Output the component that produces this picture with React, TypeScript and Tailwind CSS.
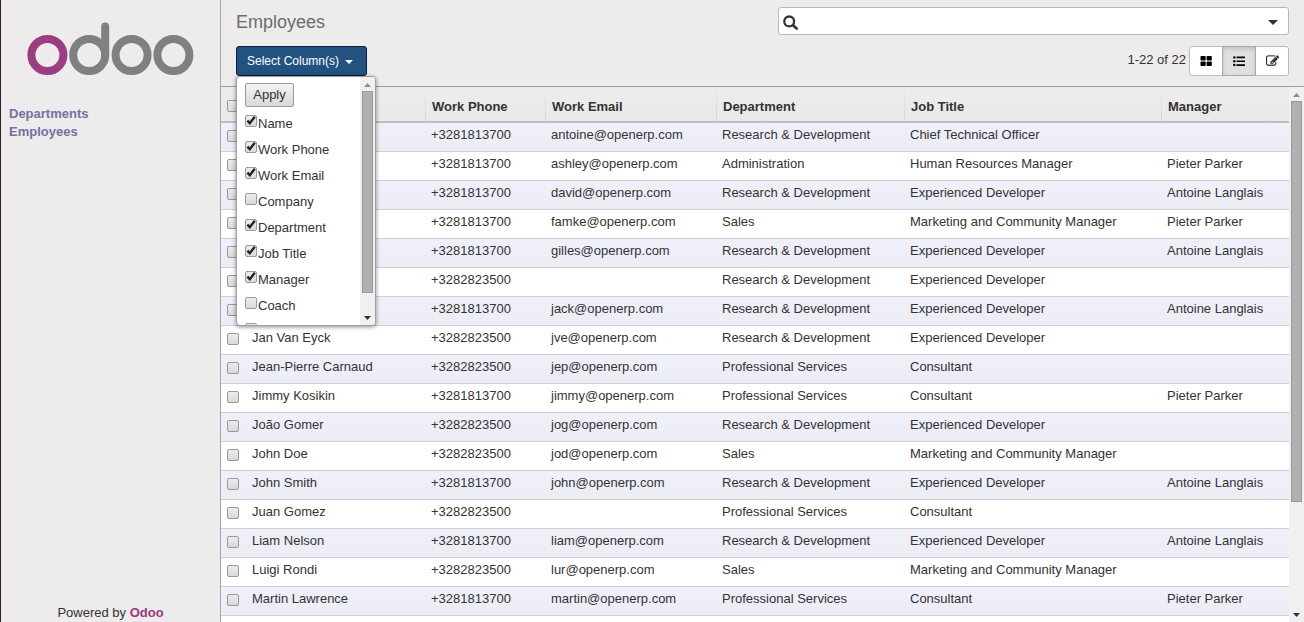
import { useState } from 'react';

type Employee = {
  name: string;
  phone: string;
  email: string;
  department: string;
  job: string;
  manager: string;
};

const RD = 'Research & Development';
const DEV = 'Experienced Developer';
const PS = 'Professional Services';
const MCM = 'Marketing and Community Manager';

const e = (name: string, phone: string, email: string, department: string, job: string, manager = ''): Employee => ({
  name,
  phone,
  email,
  department,
  job,
  manager,
});

const employees: Employee[] = [
  e('', '+3281813700', 'antoine@openerp.com', RD, 'Chief Technical Officer'),
  e('', '+3281813700', 'ashley@openerp.com', 'Administration', 'Human Resources Manager', 'Pieter Parker'),
  e('', '+3281813700', 'david@openerp.com', RD, DEV, 'Antoine Langlais'),
  e('', '+3281813700', 'famke@openerp.com', 'Sales', MCM, 'Pieter Parker'),
  e('', '+3281813700', 'gilles@openerp.com', RD, DEV, 'Antoine Langlais'),
  e('', '+3282823500', '', RD, DEV),
  e('', '+3281813700', 'jack@openerp.com', RD, DEV, 'Antoine Langlais'),
  e('Jan Van Eyck', '+3282823500', 'jve@openerp.com', RD, DEV),
  e('Jean-Pierre Carnaud', '+3282823500', 'jep@openerp.com', PS, 'Consultant'),
  e('Jimmy Kosikin', '+3281813700', 'jimmy@openerp.com', PS, 'Consultant', 'Pieter Parker'),
  e('João Gomer', '+3282823500', 'jog@openerp.com', RD, DEV),
  e('John Doe', '+3282823500', 'jod@openerp.com', 'Sales', MCM),
  e('John Smith', '+3281813700', 'john@openerp.com', RD, DEV, 'Antoine Langlais'),
  e('Juan Gomez', '+3282823500', '', PS, 'Consultant'),
  e('Liam Nelson', '+3281813700', 'liam@openerp.com', RD, DEV, 'Antoine Langlais'),
  e('Luigi Rondi', '+3282823500', 'lur@openerp.com', 'Sales', MCM),
  e('Martin Lawrence', '+3281813700', 'martin@openerp.com', PS, 'Consultant', 'Pieter Parker'),
];

const initialColumns = [
  { label: 'Name', on: true },
  { label: 'Work Phone', on: true },
  { label: 'Work Email', on: true },
  { label: 'Company', on: false },
  { label: 'Department', on: true },
  { label: 'Job Title', on: true },
  { label: 'Manager', on: true },
  { label: 'Coach', on: false },
  { label: '', on: false },
];

function Checkbox({ id, label, checked, onChange }: { id?: string; label?: string; checked?: boolean; onChange?: () => void }) {
  return (
    <span className="relative block size-3 shrink-0">
      <input
        id={id}
        type="checkbox"
        aria-label={label}
        defaultChecked={onChange ? undefined : false}
        checked={onChange ? checked : undefined}
        onChange={onChange}
        className="peer block size-3 appearance-none rounded-[2px] border border-[#999] bg-linear-to-b from-[#ececec] to-[#d9d9d9]"
      />
      <svg viewBox="0 0 12 12" className="pointer-events-none absolute inset-0 hidden size-3 overflow-visible peer-checked:block" aria-hidden="true">
        <path d="M2.4 5.6 L4.8 8.2 L9.8 1.8" fill="none" stroke="#222" strokeWidth="2.4" />
      </svg>
    </span>
  );
}

function Caret({ className }: { className: string }) {
  return (
    <svg viewBox="0 0 10 5" className={className} preserveAspectRatio="none" aria-hidden="true">
      <path d="M0 0H10L5 5Z" fill="currentColor" />
    </svg>
  );
}

function ScrollTrack({ thumb }: { thumb: string }) {
  return (
    <div className="flex w-[15px] shrink-0 flex-col items-center bg-[#f0f0f0]">
      <button type="button" aria-label="Scroll up" className="flex h-3.5 w-full shrink-0 items-center justify-center pt-0.5 text-[#8c8c8c]">
        <Caret className="h-1 w-[7px] rotate-180" />
      </button>
      <div className="min-h-0 w-full flex-1 px-0.5">
        <div className={`w-full border border-[#999] bg-[#b1b1b1] ${thumb}`} />
      </div>
      <button type="button" aria-label="Scroll down" className="flex h-3.5 w-full shrink-0 items-center justify-center text-[#333]">
        <Caret className="h-1 w-[7px]" />
      </button>
    </div>
  );
}

function Logo() {
  return (
    <svg viewBox="0 0 168 54" className="h-[54px] w-[168px]" role="img" aria-label="odoo">
      <g fill="none" strokeWidth="8">
        <circle cx="21.4" cy="33" r="16" stroke="#9c3d83" />
        <g stroke="#7f8180">
          <circle cx="63.2" cy="33" r="16" />
          <path d="M79.2 4.5V33" strokeLinecap="round" />
          <circle cx="105.6" cy="33" r="16" />
          <circle cx="147.4" cy="33" r="16" />
        </g>
      </g>
    </svg>
  );
}

function Sidebar() {
  return (
    <aside className="flex w-[221px] shrink-0 flex-col border-r border-l border-r-[#a3a3a8] border-l-[#2e1b27] bg-[#edebeb]">
      <a href="#home" className="mt-[22px] ml-[25px] block">
        <Logo />
      </a>
      <nav className="mt-[29px] flex flex-col pl-2 leading-[18px] font-bold text-[#7371a3]">
        <a href="#departments">Departments</a>
        <a href="#employees">Employees</a>
      </nav>
      <p className="mt-auto text-center leading-[18px]">
        Powered by{' '}
        <a href="#odoo" className="font-bold text-[#983a80]">
          Odoo
        </a>
      </p>
    </aside>
  );
}

function ColumnMenu() {
  const [columns, setColumns] = useState(initialColumns);
  const toggle = (i: number) => setColumns(columns.map((c, j) => (j === i ? { ...c, on: !c.on } : c)));
  return (
    <div className="absolute top-full left-0 z-10 flex h-[250px] w-[140px] overflow-hidden rounded-sm border border-[#a0a0a0] bg-white shadow-[0_1px_4px_rgba(0,0,0,0.45)]">
      <div className="min-w-0 flex-1 overflow-hidden pt-1.5 pl-2">
        <button type="button" className="block h-6 w-[49px] rounded-[2px] border border-[#999] bg-linear-to-b from-[#f4f4f4] to-[#d8d8d8] text-center leading-[22px]">
          Apply
        </button>
        <ul className="pt-1">
          {columns.map((c, i) => (
            <li key={i} className="flex h-[26px] items-start gap-px pt-1">
              <Checkbox id={`col-${i}`} label={c.label || 'Other'} checked={c.on} onChange={() => toggle(i)} />
              <label htmlFor={`col-${i}`} className="leading-[18px] whitespace-nowrap">
                {c.label}
              </label>
            </li>
          ))}
        </ul>
      </div>
      <ScrollTrack thumb="h-[92%]" />
    </div>
  );
}

function Toolbar() {
  return (
    <header className="shrink-0 border-b border-[#9c9ca2] bg-[#edebeb] pt-[7px] pr-[15px] pb-2.5 pl-[15px]">
      <div className="flex items-center justify-between">
        <h1 className="pt-0.5 text-lg leading-6 text-[#6c6c6c]">Employees</h1>
        <div className="flex h-7 w-[511px] items-center rounded-[3px] border border-[#b8b8b8] bg-white pr-2.5 pl-1">
          <svg viewBox="0 0 16 16" className="mt-1 size-4 shrink-0" aria-hidden="true">
            <circle cx="6.2" cy="6.4" r="4.9" fill="none" stroke="#333" strokeWidth="2.3" />
            <path d="M10 10.2 13.6 13.6" stroke="#333" strokeWidth="2.7" strokeLinecap="round" />
          </svg>
          <input type="search" aria-label="Search" className="min-w-0 flex-1 bg-transparent px-1 outline-none" />
          <button type="button" aria-label="Advanced search">
            <Caret className="mt-0.5 h-[5px] w-2.5" />
          </button>
        </div>
      </div>
      <div className="mt-[11px] flex items-center justify-between">
        <div className="relative">
          <button type="button" className="flex h-[30px] w-[131px] items-center gap-1.5 rounded-[3px] border border-[#0b1f3d] bg-[#22527f] pl-2.5 text-xs text-white">
            Select Column(s)
            <Caret className="mt-0.5 h-1 w-2" />
          </button>
          <ColumnMenu />
        </div>
        <div className="flex items-center gap-[3px]">
          <span className="pb-0.5">1-22 of 22</span>
          <div className="flex h-[30px] rounded-[3px] border border-[#bbb] bg-white text-black">
            <button type="button" aria-label="Kanban view" className="flex w-8 items-center justify-center">
              <svg viewBox="0 0 12 12" className="size-3" fill="currentColor" aria-hidden="true">
                <rect x="0.5" y="1" width="5.2" height="4.6" rx="0.8" />
                <rect x="6.6" y="1" width="5.2" height="4.6" rx="0.8" />
                <rect x="0.5" y="6.5" width="5.2" height="4.6" rx="0.8" />
                <rect x="6.6" y="6.5" width="5.2" height="4.6" rx="0.8" />
              </svg>
            </button>
            <button type="button" aria-label="List view" aria-pressed="true" className="-my-px flex w-[34px] items-center justify-center border border-[#aaa] bg-[#e0e0e0] shadow-[inset_0_2px_4px_rgba(0,0,0,0.15)]">
              <svg viewBox="0 0 12 12" className="size-3" fill="currentColor" aria-hidden="true">
                <circle cx="1.3" cy="2.4" r="1.2" />
                <circle cx="1.3" cy="6.2" r="1.2" />
                <circle cx="1.3" cy="10" r="1.2" />
                <rect x="3.5" y="1.6" width="8.5" height="1.7" rx="0.2" />
                <rect x="3.5" y="5.4" width="8.5" height="1.7" rx="0.2" />
                <rect x="3.5" y="9.2" width="8.5" height="1.7" rx="0.2" />
              </svg>
            </button>
            <button type="button" aria-label="Form view" className="flex w-8 items-center justify-center">
              <svg viewBox="0 128 1792 1536" className="h-3 w-[13px]" fill="#222" stroke="#222" strokeWidth="30" aria-hidden="true">
                <path d="M888 1184l116-116-152-152-116 116v56h96v96h56zm440-720q-16-16-33 1l-350 350q-17 17-1 33t33-1l350-350q17-17 1-33zm80 594v190q0 119-84.5 203.5t-203.5 84.5h-832q-119 0-203.5-84.5t-84.5-203.5v-832q0-119 84.5-203.5t203.5-84.5h832q63 0 117 25 15 7 18 23 3 17-9 29l-49 49q-14 14-32 8-23-6-45-6h-832q-66 0-113 47t-47 113v832q0 66 47 113t113 47h832q66 0 113-47t47-113v-126q0-13 9-22l64-64q15-15 35-7t20 29zm-96-738l288 288-672 672h-288v-288zm444 132l-92 92-288-288 92-92q28-28 68-28t68 28l152 152q28 28 28 68t-28 68z" />
              </svg>
            </button>
          </div>
        </div>
      </div>
    </header>
  );
}

const headings = ['Work Phone', 'Work Email', 'Department', 'Job Title', 'Manager'];

function EmployeeTable() {
  return (
    <table className="w-full table-fixed border-separate border-spacing-0 text-left">
      <colgroup>
        <col className="w-6" />
        <col className="w-[180px]" />
        <col className="w-[120px]" />
        <col className="w-[171px]" />
        <col className="w-[188px]" />
        <col className="w-[257px]" />
        <col className="w-[128px]" />
      </colgroup>
      <thead>
        <tr className="h-9 bg-linear-to-b from-[#eeecec] to-[#e9e9e9]">
          <th className="border-b-2 border-[#bfbfc3] pt-1 pl-1.5">
            <Checkbox label="Select all" />
          </th>
          <th className="border-b-2 border-[#bfbfc3]" aria-label="Name" />
          {headings.map((h) => (
            <th key={h} className="border-b-2 border-[#bfbfc3] bg-[linear-gradient(to_bottom,transparent,#d4d4d6)] bg-[size:1px_100%] bg-left bg-no-repeat pt-1.5 pl-[7px] font-bold">
              {h}
            </th>
          ))}
        </tr>
      </thead>
      <tbody className="[&_td]:border-b [&_td]:border-[#cfcfd6] [&_td]:pb-1 [&_td]:pl-1.5 [&_td]:whitespace-nowrap">
        {employees.map((p, i) => (
          <tr key={i} className="h-[29px] bg-white odd:bg-linear-to-b odd:from-[#f0f0fa] odd:to-[#ececf5]">
            <td>
              <div className="pt-0.5">
                <Checkbox label={`Select row ${i + 1}`} />
              </div>
            </td>
            <td>
              <span className="pl-px">{p.name}</span>
            </td>
            <td>{p.phone}</td>
            <td>{p.email}</td>
            <td>{p.department}</td>
            <td>{p.job}</td>
            <td>{p.manager}</td>
          </tr>
        ))}
      </tbody>
    </table>
  );
}

export default function App() {
  return (
    <div className="flex h-screen overflow-hidden bg-white font-['Liberation_Sans',Arial,sans-serif] text-[13px] leading-[18px] text-[#333]">
      <Sidebar />
      <main className="flex min-w-0 flex-1 flex-col">
        <Toolbar />
        <div className="flex min-h-0 flex-1">
          <div className="min-w-0 flex-1 overflow-hidden">
            <EmployeeTable />
          </div>
          <ScrollTrack thumb="h-[79%]" />
        </div>
      </main>
    </div>
  );
}
